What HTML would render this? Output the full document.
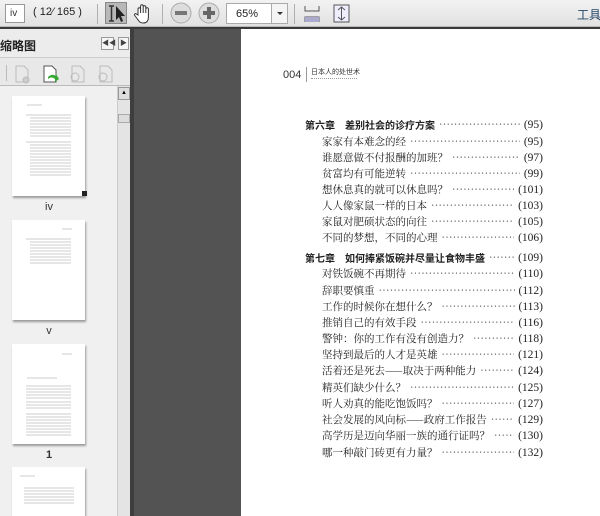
<!DOCTYPE html>
<html style="width:600px;height:516px;overflow:hidden"><head><meta charset="utf-8"><style>
*{margin:0;padding:0;box-sizing:border-box}
body{width:600px;height:516px;overflow:hidden;position:relative;background:#535353;font-family:"Liberation Sans","Noto Sans CJK SC",sans-serif}
.a{position:absolute}
#tb{left:0;top:0;width:600px;height:27px;background:linear-gradient(#f2f2f2,#e2e2e2);border-bottom:1px solid #b8b8b8;overflow:hidden}
#ln{left:0;top:27px;width:600px;height:2px;background:#3a3a3a}
.sep{position:absolute;top:4px;width:1px;height:20px;background:#b0b0b0}
#lp{left:0;top:29px;width:130px;height:487px;background:#efefef;overflow:hidden}
#lp2{left:130px;top:29px;width:4px;height:487px;background:#3e3e3e}
#page{left:241px;top:29px;width:359px;height:487px;background:#fff;overflow:hidden}
.row{position:absolute;left:0;width:238px;display:flex;font-family:"Noto Serif CJK SC","Liberation Serif",serif;font-size:10.5px;color:#222;line-height:14px;white-space:nowrap}
.row .d{flex:1;overflow:hidden;color:#555;letter-spacing:0.3px;margin:0 4px}
.row .p{font-family:"Liberation Serif",serif;font-size:11.5px}
.ch{font-family:"Noto Sans CJK SC",sans-serif;font-weight:bold;font-size:10px}
.th{position:absolute;left:12px;width:73px;height:100px;background:#fff;box-shadow:1px 2px 2px #999}
.lab{position:absolute;left:0;width:98px;text-align:center;font-size:11px;color:#333}
</style></head><body>
<div id="tb" class="a">
 <div class="a" style="left:5px;top:4px;width:20px;height:19px;background:#fff;border:1px solid #999;font-size:10px;color:#333;padding:3px 0 0 4px">iv</div>
 <div class="a" style="left:33px;top:6px;font-size:11px;color:#222;white-space:nowrap">( 12⁄ 165 )</div>
 <div class="sep" style="left:97px"></div>
 <div class="a" style="left:105px;top:2px;width:22px;height:22px;background:#b8b8b8;border:1px solid #888"></div>
 <svg class="a" style="left:106px;top:4px" width="22" height="20"><path d="M3 2h5M5.5 2v15M3 17h5" stroke="#333" stroke-width="1.5" fill="none"/><path d="M10 2l0 14 3-3 2 5 2-1-2-5 4 0z" fill="#222"/></svg>
 <svg class="a" style="left:133px;top:3px" width="20" height="22"><path d="M5 12V6a1.3 1.3 0 0 1 2.6 0v4V3a1.3 1.3 0 0 1 2.6 0v7V4a1.3 1.3 0 0 1 2.6 0v6V6a1.3 1.3 0 0 1 2.6 0v8c0 4-2 6-5 6s-4-1-6-4l-3-4a1.2 1.2 0 0 1 2-1z" fill="#fff" stroke="#333" stroke-width="1"/></svg>
 <div class="sep" style="left:162px"></div>
 <svg class="a" style="left:170px;top:2px" width="22" height="22"><circle cx="11" cy="11" r="10" fill="#ddd" stroke="#aaa"/><rect x="5" y="9" width="12" height="4" fill="#777"/></svg>
 <svg class="a" style="left:198px;top:2px" width="22" height="22"><circle cx="11" cy="11" r="10" fill="#ddd" stroke="#aaa"/><rect x="5" y="9" width="12" height="4" fill="#666"/><rect x="9" y="5" width="4" height="12" fill="#666"/></svg>
 <div class="a" style="left:226px;top:3px;width:46px;height:21px;background:#fff;border:1px solid #aaa;font-size:11px;color:#222;padding:4px 0 0 9px">65%</div>
 <div class="a" style="left:272px;top:3px;width:16px;height:21px;background:#f4f4f4;border:1px solid #aaa;border-left:none"></div>
 <div class="a" style="left:277px;top:12px;border:3px solid transparent;border-top:3px solid #333"></div>
 <div class="sep" style="left:294px"></div>
 <svg class="a" style="left:304px;top:5px" width="16" height="18"><path d="M1 1v5h14V1M1 17v-5h14v5" stroke="#555" fill="none"/><rect x="1" y="12" width="14" height="5" fill="#aac"/></svg>
 <svg class="a" style="left:333px;top:4px" width="17" height="19"><rect x="1" y="1" width="15" height="17" fill="#eef" stroke="#555"/><path d="M8.5 3v13M5 6l3.5-3 3.5 3M5 13l3.5 3 3.5-3" stroke="#555" fill="none"/></svg>
 <div class="a" style="left:577px;top:6px;font-size:12px;color:#246;white-space:nowrap">工具</div>
</div>
<div id="ln" class="a"></div>
<div id="lp" class="a">
 <div class="a" style="left:0;top:0;width:130px;height:29px;background:#ececec;border-bottom:1px solid #ccc"></div>
 <div class="a" style="left:0;top:8px;font-size:12px;font-weight:bold;color:#222;white-space:nowrap">缩略图</div>
 <div class="a" style="left:101px;top:8px;width:13px;height:13px;border:1px solid #999;background:#f6f6f6;font-size:7px;color:#444;text-align:center;line-height:11px">◀◀</div>
 <div class="a" style="left:118px;top:8px;width:11px;height:13px;border:1px solid #999;background:#f6f6f6;font-size:7px;color:#444;text-align:center;line-height:11px">▶</div>
 <div class="a" style="left:0;top:29px;width:130px;height:28px;background:#e8e8e8;border-bottom:1px solid #bbb"></div>
 <div class="a" style="left:6px;top:36px;width:1px;height:16px;background:#bbb"></div>
 <svg class="a" style="left:12px;top:34px;" width="110" height="22"><g fill="none" stroke="#bbb"><path d="M4 3h8l4 4v12H4z"/><circle cx="14" cy="17" r="3" fill="#ccc"/><path d="M60 3h8l4 4v12H60z"/><circle cx="63" cy="14" r="4"/><path d="M88 3h8l4 4v12H88z"/><circle cx="91" cy="14" r="4"/></g><path d="M32 3h8l4 4v12H32z" fill="#fff" stroke="#555"/><path d="M36 14c3-3 7-3 8 0v-3l3 5-4 3v-3c-2-2-5-2-7 0z" fill="#3a3"/></svg>
 <div class="a" style="left:0;top:57px;width:117px;height:430px;background:#f0f0f0"></div>
 <div class="a" style="left:117px;top:57px;width:13px;height:430px;background:#e4e4e4;border-left:1px solid #ccc"></div>
 <div class="a" style="left:118px;top:58px;width:12px;height:13px;background:#ddd;border:1px solid #999;font-size:6px;text-align:center;line-height:11px">▲</div>
 <div class="a" style="left:118px;top:85px;width:12px;height:9px;background:#ddd;border:1px solid #aaa"></div>
 <div class="th" style="top:67px"></div>
 <div class="a" style="left:82px;top:162px;width:5px;height:5px;background:#222"></div>
 <div class="lab" style="top:172px">iv</div>
 <div class="th" style="top:191px"></div>
 <div class="lab" style="top:296px">v</div>
 <div class="th" style="top:315px"></div>
 <div class="lab" style="top:420px;font-weight:bold">1</div>
 <div class="th" style="top:438px"></div>
 <svg class="a" style="left:12px;top:67px" width="73" height="420"><g stroke="#ccc" stroke-width="1">
 <path d="M15 9h15M14 19h45M18 22h41M18 25h41M18 28h41M18 31h41M18 34h41M18 37h41M18 40h41M14 46h45M18 49h41M18 52h41M18 55h41M18 58h41M18 61h41M18 64h41M18 67h41M18 70h41M18 73h41M18 76h41M18 79h41"/>
 <path d="M50 133h10M14 143h45M18 146h41M18 149h41M18 152h41M18 155h41M18 158h41M18 161h41M18 164h41M18 167h41"/>
 <path d="M50 258h10M15 282h30M14 290h45M14 293h45M14 296h45M14 299h45M14 302h45M14 306h45M14 309h45M14 312h45M14 318h45M14 321h45M14 324h45M14 327h45M14 330h45M14 333h45M14 336h45M14 339h45"/>
 <path d="M8 380h15M12 392h50M12 395h50M12 398h50M12 401h50M12 404h50M12 407h50"/></g></svg>
</div>
<div id="lp2" class="a"></div>
<div id="page" class="a">
 <div class="a" style="left:42px;top:40px;font-size:11px;color:#333">004</div>
 <div class="a" style="left:65px;top:38px;width:1px;height:15px;background:#999"></div>
 <div class="a" style="left:70px;top:38px;font-size:7px;color:#333;font-family:'Noto Sans CJK SC',sans-serif;white-space:nowrap">日本人的处世术</div>
 <div class="a" style="left:70px;top:49px;width:46px;height:1px;border-top:1px dotted #999"></div>
 <div style="position:absolute;left:64px;top:0">
 <div class="row" style="top:89px"><span class="ch">第六章　差别社会的诊疗方案</span><span class="d">··························································</span><span class="p">(95)</span></div>
 <div class="row" style="top:106px;left:17px;width:221px"><span>家家有本难念的经</span><span class="d">··························································</span><span class="p">(95)</span></div>
 <div class="row" style="top:122px;left:17px;width:221px"><span>谁愿意做不付报酬的加班？</span><span class="d">··························································</span><span class="p">(97)</span></div>
 <div class="row" style="top:138px;left:17px;width:221px"><span>贫富均有可能逆转</span><span class="d">··························································</span><span class="p">(99)</span></div>
 <div class="row" style="top:154px;left:17px;width:221px"><span>想休息真的就可以休息吗？</span><span class="d">··························································</span><span class="p">(101)</span></div>
 <div class="row" style="top:170px;left:17px;width:221px"><span>人人像家鼠一样的日本</span><span class="d">··························································</span><span class="p">(103)</span></div>
 <div class="row" style="top:186px;left:17px;width:221px"><span>家鼠对肥硕状态的向往</span><span class="d">··························································</span><span class="p">(105)</span></div>
 <div class="row" style="top:202px;left:17px;width:221px"><span>不同的梦想，不同的心理</span><span class="d">··························································</span><span class="p">(106)</span></div>
 <div class="row" style="top:222px"><span class="ch">第七章　如何捧紧饭碗并尽量让食物丰盛</span><span class="d">··························································</span><span class="p">(109)</span></div>
 <div class="row" style="top:238px;left:17px;width:221px"><span>对铁饭碗不再期待</span><span class="d">··························································</span><span class="p">(110)</span></div>
 <div class="row" style="top:255px;left:17px;width:221px"><span>辞职要慎重</span><span class="d">··························································</span><span class="p">(112)</span></div>
 <div class="row" style="top:271px;left:17px;width:221px"><span>工作的时候你在想什么？</span><span class="d">··························································</span><span class="p">(113)</span></div>
 <div class="row" style="top:287px;left:17px;width:221px"><span>推销自己的有效手段</span><span class="d">··························································</span><span class="p">(116)</span></div>
 <div class="row" style="top:303px;left:17px;width:221px"><span>警钟：你的工作有没有创造力？</span><span class="d">··························································</span><span class="p">(118)</span></div>
 <div class="row" style="top:319px;left:17px;width:221px"><span>坚持到最后的人才是英雄</span><span class="d">··························································</span><span class="p">(121)</span></div>
 <div class="row" style="top:335px;left:17px;width:221px"><span>活着还是死去——取决于两种能力</span><span class="d">··························································</span><span class="p">(124)</span></div>
 <div class="row" style="top:352px;left:17px;width:221px"><span>精英们缺少什么？</span><span class="d">··························································</span><span class="p">(125)</span></div>
 <div class="row" style="top:368px;left:17px;width:221px"><span>听人劝真的能吃饱饭吗？</span><span class="d">··························································</span><span class="p">(127)</span></div>
 <div class="row" style="top:384px;left:17px;width:221px"><span>社会发展的风向标——政府工作报告</span><span class="d">··························································</span><span class="p">(129)</span></div>
 <div class="row" style="top:400px;left:17px;width:221px"><span>高学历是迈向华丽一族的通行证吗？</span><span class="d">··························································</span><span class="p">(130)</span></div>
 <div class="row" style="top:417px;left:17px;width:221px"><span>哪一种敲门砖更有力量？</span><span class="d">··························································</span><span class="p">(132)</span></div>
 </div>
</div>
</body></html>
